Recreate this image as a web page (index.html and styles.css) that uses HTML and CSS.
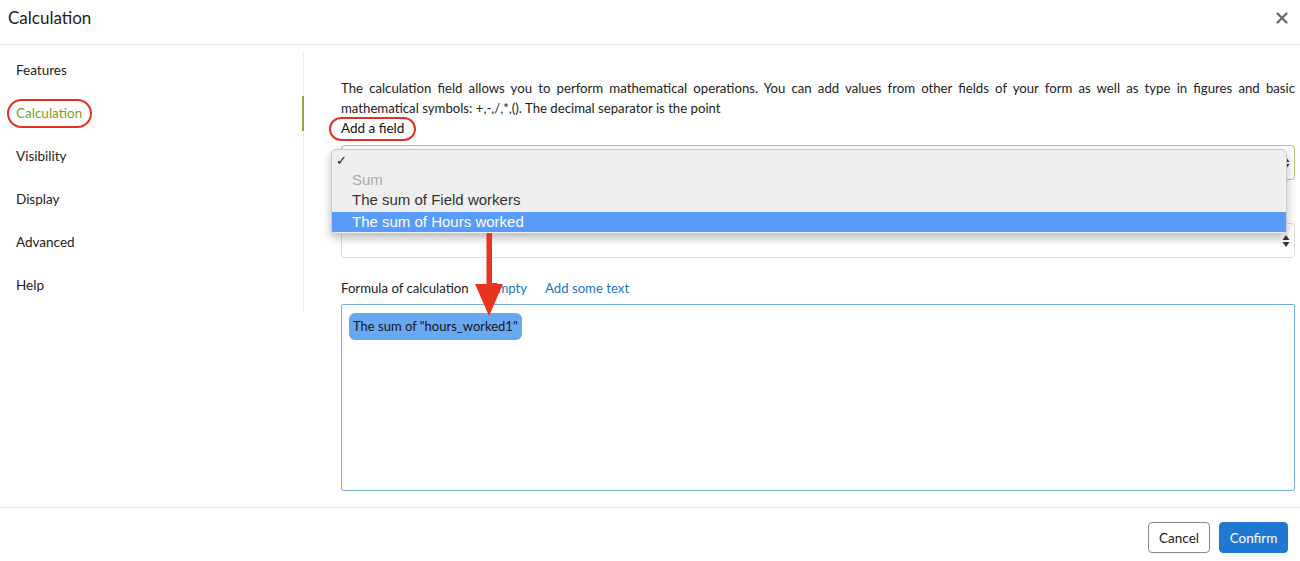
FILE: index.html
```html
<!DOCTYPE html>
<html>
<head>
<meta charset="utf-8">
<link rel="stylesheet" href="styles.css">
</head>
<body>
<div class="modal">
  <div class="header">
    <div class="title">Calculation</div>
    <div class="close">
      <svg width="12" height="12" viewBox="0 0 12 12"><path d="M1.5 1.5 L10.5 10.5 M10.5 1.5 L1.5 10.5" stroke="#666" stroke-width="2.2" stroke-linecap="round"/></svg>
    </div>
  </div>
  <div class="main">
    <div class="sidebar">
      <ul class="nav">
        <li class="item">Features</li>
        <li class="item active">Calculation</li>
        <li class="item">Visibility</li>
        <li class="item">Display</li>
        <li class="item">Advanced</li>
        <li class="item">Help</li>
      </ul>
    </div>
    <div class="content">
      <p class="intro">The calculation field allows you to perform mathematical operations. You can add values from other fields of your form as well as type in figures and basic mathematical symbols: +,-,/,*,(). The decimal separator is the point</p>
      <div class="label">Add a field</div>
      <div class="select focus">
        <svg class="updown" width="8" height="14" viewBox="0 0 8 14"><path d="M4 1 L7.5 6 L0.5 6 Z M4 13 L7.5 8 L0.5 8 Z" fill="#333"/></svg>
      </div>
      <div class="select second">
        <svg class="updown" width="8" height="14" viewBox="0 0 8 14"><path d="M4 1 L7.5 6 L0.5 6 Z M4 13 L7.5 8 L0.5 8 Z" fill="#333"/></svg>
      </div>
      <div class="formula-row">
        <span class="formula-label">Formula of calculation</span>
        <a class="link empty">Empty</a>
        <a class="link">Add some text</a>
      </div>
      <div class="formula-box">
        <span class="chip">The sum of "hours_worked1"</span>
      </div>
    </div>
  </div>
  <div class="footer">
    <button class="btn cancel">Cancel</button>
    <button class="btn confirm">Confirm</button>
  </div>

  <div class="ring ring-calc"></div>
  <div class="ring ring-field"></div>

  <div class="popup">
    <div class="opt check">✓</div>
    <div class="opt disabled">Sum</div>
    <div class="opt">The sum of Field workers</div>
    <div class="opt selected">The sum of Hours worked</div>
  </div>

  <svg class="arrow" width="40" height="90" viewBox="0 0 40 90">
    <polygon points="16.5,2 22,2 22,55 16.5,55" fill="#e8341e"/>
    <polygon points="5,53 33,53 19,85" fill="#e8341e"/>
  </svg>
</div>
</body>
</html>
```
FILE: styles.css
```css
* { box-sizing: border-box; }
html, body { margin: 0; padding: 0; background: #fff; }
body { font-family: Lato, "Open Sans", sans-serif; color: #222; }
.modal { position: relative; width: 1300px; height: 561px; overflow: hidden; }

.header {
  height: 45px;
  border-bottom: 1px solid #e6e6e6;
  display: flex;
  align-items: center;
  justify-content: space-between;
  padding: 0 12px 0 8px;
}
.title { font-size: 17px; color: #222; margin-top: -10px; }
.close { width: 12px; height: 12px; margin-top: -8px; display: flex; }

.main { display: flex; height: 462px; }
.sidebar { width: 304px; flex: none; padding-top: 7px; }
.nav {
  list-style: none;
  margin: 0;
  padding: 1px 0 8px 0;
  border-right: 1px solid #ececec;
  display: flex;
  flex-direction: column;
  gap: 8px;
}
.item { height: 35px; line-height: 35px; padding-left: 16px; font-size: 13.5px; color: #222; }
.item.active { color: #7f9c2e; border-right: 2px solid #8ea63c; margin-right: -1px; }

.content { margin-left: 37px; width: 954px; padding-top: 33px; }
.intro {
  margin: 0;
  font-size: 13.2px;
  line-height: 20px;
  text-align: justify;
  color: #222;
}
.label { font-size: 13.5px; line-height: 20px; color: #111; }

.select {
  position: relative;
  height: 35px;
  border: 1px solid #dcdcdc;
  border-radius: 4px;
  margin-top: 7px;
}
.select.focus { border-color: #b6c27c; }
.select.second { margin-top: 43px; }
.updown { position: absolute; right: 4px; top: 10px; }

.formula-row { margin-top: 20px; height: 20px; line-height: 20px; font-size: 13.2px; display: flex; }
.formula-label { color: #222; width: 149px; }
.link { color: #2174c9; }
.empty { width: 55px; }

.formula-box {
  margin-top: 6px;
  height: 187px;
  border: 1px solid #79aee2;
  border-radius: 2px;
  padding: 8px 7px;
}
.chip {
  display: inline-block;
  height: 27px;
  line-height: 27px;
  padding: 0 4px;
  background: #68a8f2;
  border-radius: 6px;
  font-size: 13px;
  color: #151515;
}

.footer {
  height: 54px;
  border-top: 1px solid #e6e6e6;
  display: flex;
  justify-content: flex-end;
  align-items: flex-start;
  padding: 14px 12px 0 0;
  gap: 9px;
}
.btn {
  height: 31px;
  border-radius: 4px;
  font-family: Lato, sans-serif;
  font-size: 13.5px;
  padding: 0;
}
.cancel { width: 62px; background: #fff; border: 1px solid #8a8a8a; color: #222; }
.confirm { width: 69px; background: #1f79d2; border: 1px solid #1f79d2; color: #fff; }

.ring {
  position: absolute;
  border: 2px solid #e2311e;
  border-radius: 15px;
}
.ring-calc { left: 7px; top: 99px; width: 85px; height: 29px; }
.ring-field { left: 329px; top: 117px; width: 87px; height: 24px; border-radius: 12px; }

.popup {
  position: absolute;
  left: 331px;
  top: 149px;
  width: 956px;
  height: 85px;
  background: #efefef;
  border: 1px solid #cbcbcb;
  border-radius: 5px;
  box-shadow: 0 4px 10px rgba(0,0,0,0.28);
  padding-top: 1px;
  font-family: "Liberation Sans", Arial, sans-serif;
  font-size: 15px;
  color: #333;
}
.opt { height: 20px; line-height: 20px; padding-left: 20px; }
.opt.check { height: 19px; padding-left: 4px; font-size: 13px; font-weight: bold; color: #111; font-family: "DejaVu Sans", sans-serif; }
.opt.disabled { color: #a9a9a9; }
.opt.selected { margin-top: 2px; background: #599bf8; color: #fff; }

.arrow { position: absolute; left: 470px; top: 231px; }
```
